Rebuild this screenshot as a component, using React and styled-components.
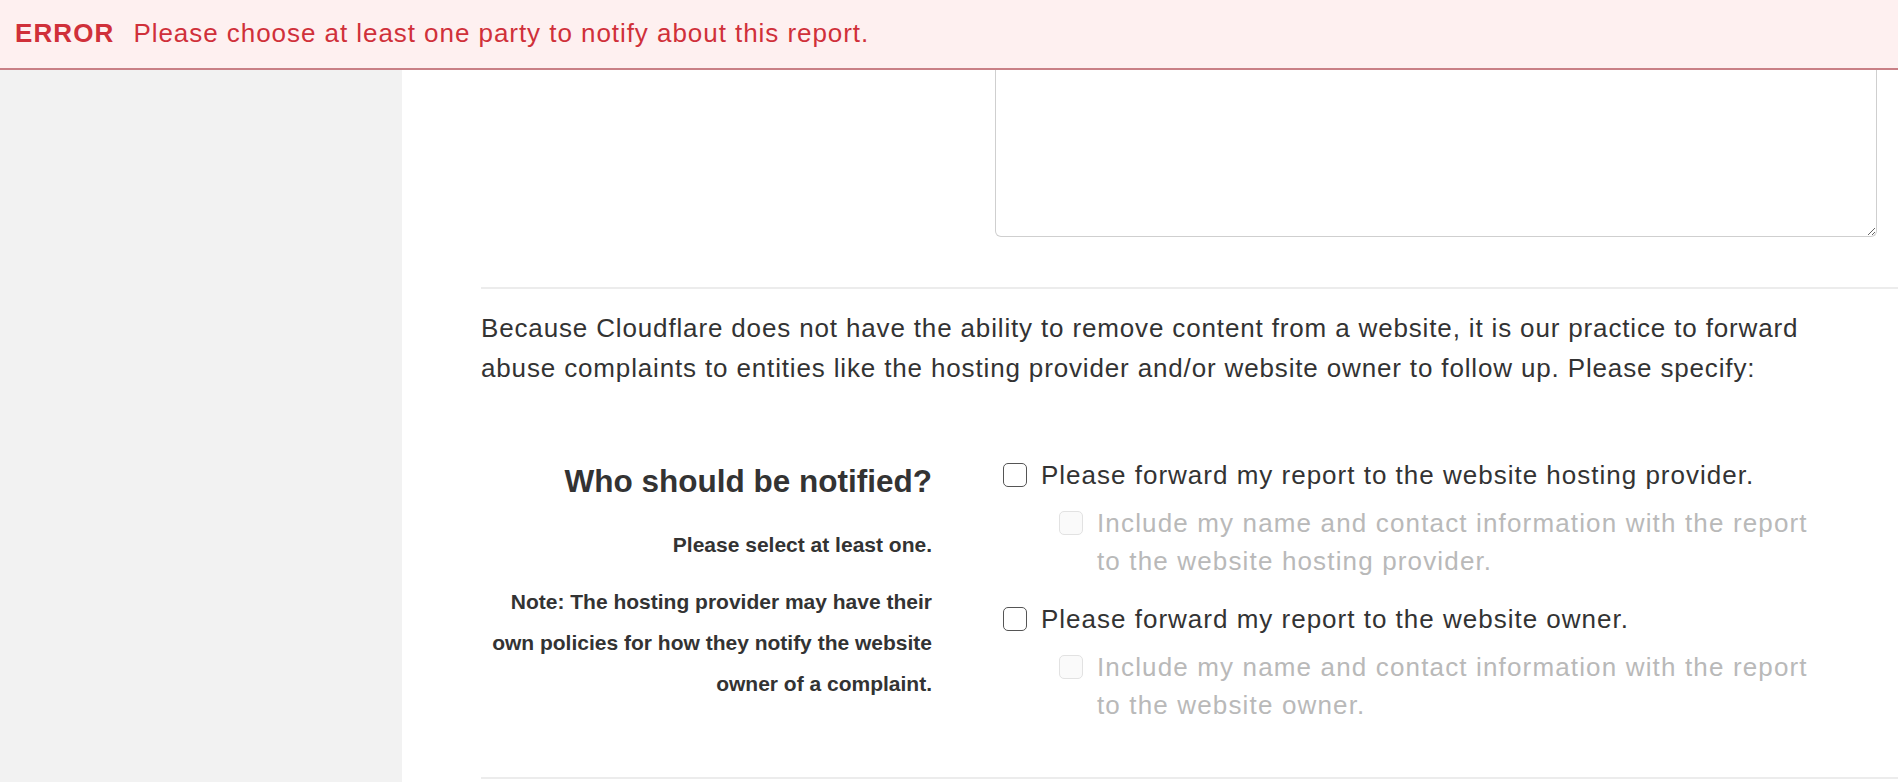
import React from 'react';
import styled, { createGlobalStyle } from 'styled-components';

const GlobalStyle = createGlobalStyle`
  html, body {
    margin: 0;
    padding: 0;
    background: #ffffff;
    font-family: "Liberation Sans", Arial, Helvetica, sans-serif;
    color: #333333;
    overflow: hidden;
  }
  * { box-sizing: border-box; }
`;

const ErrorBar = styled.div`
  height: 70px;
  display: flex;
  align-items: center;
  gap: 19px;
  padding: 0 0 2px 15px;
  background: #fef0f0;
  border-bottom: 2px solid #c98086;
  color: #d0303a;
  font-size: 26px;
  letter-spacing: 0.95px;
`;

const ErrorTag = styled.strong`
  font-size: 26px;
  font-weight: 700;
  letter-spacing: 1.1px;
`;

const Layout = styled.div`
  display: flex;
  min-height: 712px;
`;

const Sidebar = styled.aside`
  width: 402px;
  flex: none;
  background: #f2f2f2;
`;

const Main = styled.main`
  flex: 1;
  padding-left: 79px;
`;

const FieldRow = styled.div`
  display: grid;
  grid-template-columns: 451px 882px;
  column-gap: 63px;
  padding-top: ${({ $top }) => $top || 0}px;
`;

const TextArea = styled.textarea`
  grid-column: 2;
  display: block;
  width: 882px;
  height: 167px;
  margin: 0;
  resize: vertical;
  border: 1.5px solid #cfcfcf;
  border-top: none;
  border-radius: 0 0 6px 6px;
  font: inherit;
`;

const Rule = styled.hr`
  margin: ${({ $top }) => $top}px 0 0;
  height: 2px;
  border: none;
  background: #ececec;
`;

const Intro = styled.p`
  max-width: 1370px;
  margin: 19px 0 0;
  font-size: 26px;
  letter-spacing: 0.85px;
  line-height: 40px;
  color: #333333;
`;

const LabelCol = styled.div`
  padding-top: 5px;
  text-align: right;
  color: #333333;
`;

const Heading = styled.h3`
  margin: 0;
  font-size: 31.5px;
  line-height: 40px;
  font-weight: 700;
`;

const Hint = styled.p`
  margin: ${({ $top }) => $top}px 0 0;
  font-size: 21px;
  line-height: 41px;
  font-weight: 700;
`;

const OptionList = styled.div`
  display: flex;
  flex-direction: column;
  gap: 20px;
`;

const Option = styled.div`
  display: flex;
  flex-direction: column;
  gap: 10px;
`;

const CheckLabel = styled.label`
  display: flex;
  align-items: flex-start;
  gap: 14px;
  margin-left: ${({ $sub }) => ($sub ? 64 : 8)}px;
  font-size: 26px;
  letter-spacing: ${({ $sub }) => ($sub ? 1.15 : 1)}px;
  line-height: 38px;
  white-space: nowrap;
  color: ${({ $sub }) => ($sub ? '#b9b9b9' : '#333333')};
`;

const Box = styled.input.attrs({ type: 'checkbox' })`
  appearance: none;
  flex: none;
  width: 24px;
  height: 24px;
  margin: 7px 0 0;
  border-radius: 5px;
  border: 1.5px solid ${({ disabled }) => (disabled ? '#e2e2e2' : '#555555')};
  background: ${({ disabled }) => (disabled ? '#fafafa' : '#ffffff')};
`;

const options = [
  { main: 'Please forward my report to the website hosting provider.', sub: 'to the website hosting provider.' },
  { main: 'Please forward my report to the website owner.', sub: 'to the website owner.' },
];

const App = () => {
  return (
    <>
      <GlobalStyle />
      <ErrorBar>
        <ErrorTag>ERROR</ErrorTag>
        <span>Please choose at least one party to notify about this report.</span>
      </ErrorBar>
      <Layout>
        <Sidebar />
        <Main>
          <FieldRow>
            <TextArea />
          </FieldRow>
          <Rule $top={50} />
          <Intro>
            Because Cloudflare does not have the ability to remove content from a website, it is our practice to forward
            abuse complaints to entities like the hosting provider and/or website owner to follow up. Please specify:
          </Intro>
          <FieldRow $top={68}>
            <LabelCol>
              <Heading>Who should be notified?</Heading>
              <Hint $top={23}>Please select at least one.</Hint>
              <Hint $top={16}>
                Note: The hosting provider may have their
                <br />
                own policies for how they notify the website
                <br />
                owner of a complaint.
              </Hint>
            </LabelCol>
            <OptionList>
              {options.map((o) => (
                <Option key={o.main}>
                  <CheckLabel>
                    <Box />
                    <span>{o.main}</span>
                  </CheckLabel>
                  <CheckLabel $sub>
                    <Box disabled />
                    <span>
                      Include my name and contact information with the report
                      <br />
                      {o.sub}
                    </span>
                  </CheckLabel>
                </Option>
              ))}
            </OptionList>
          </FieldRow>
          <Rule $top={53} />
        </Main>
      </Layout>
    </>
  );
};

export default App;
